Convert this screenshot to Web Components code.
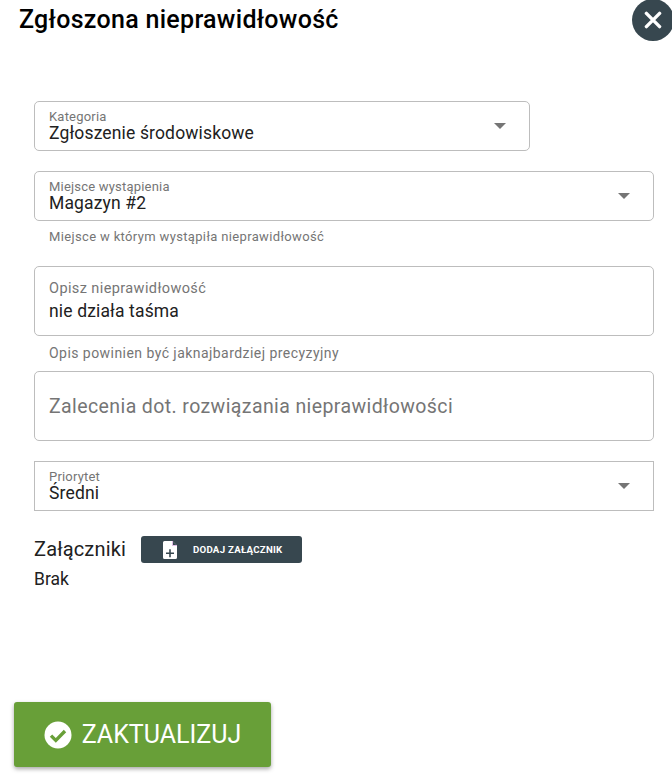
<!DOCTYPE html>
<html lang="pl">
<head>
<meta charset="utf-8">
<title>Zgłoszona nieprawidłowość</title>
<style>
  html, body { margin: 0; padding: 0; background: #fff; }
  body { font-family: Roboto, "Liberation Sans", sans-serif; width: 672px; height: 779px; overflow: hidden; }
</style>
</head>
<body>
<report-dialog>
  <span slot="title">Zgłoszona nieprawidłowość</span>
  <select-field label="Kategoria" value="Zgłoszenie środowiskowe" style="width:496px;margin-bottom:20px"></select-field>
  <select-field label="Miejsce wystąpienia" value="Magazyn #2" hint="Miejsce w którym wystąpiła nieprawidłowość" style="margin-bottom:21px"></select-field>
  <text-area-field label="Opisz nieprawidłowość" value="nie działa taśma" hint="Opis powinien być jaknajbardziej precyzyjny"></text-area-field>
  <text-area-field placeholder="Zalecenia dot. rozwiązania nieprawidłowości" style="margin-bottom:20px"></text-area-field>
  <select-field label="Priorytet" value="Średni" square></select-field>
  <attachment-list></attachment-list>
  <submit-button slot="footer">ZAKTUALIZUJ</submit-button>
</report-dialog>

<script>
class ReportDialog extends HTMLElement {
  connectedCallback() {
    this.attachShadow({ mode: 'open' });
    this.shadowRoot.innerHTML = `
      <style>
        :host { display: flex; flex-direction: column; width: 672px; height: 779px; position: relative; overflow: hidden; color: #000; }
        header { height: 101px; box-sizing: border-box; padding: 6px 0 0 19px; font-size: 25px; line-height: 28px; font-weight: 500; letter-spacing: 0.3px; }
        .body { padding: 0 18px 0 34px; flex: 1; }
        footer { padding: 0 0 12px 14px; }
        .close { position: absolute; left: 632px; top: -1px; width: 42px; height: 42px; border-radius: 50%; background: #37474f; display: flex; align-items: center; justify-content: center; }
      </style>
      <header><slot name="title"></slot></header>
      <div class="close">
        <svg width="18" height="18" viewBox="0 0 18 18"><path d="M2.4 2.4 15.6 15.6M15.6 2.4 2.4 15.6" stroke="#fff" stroke-width="3.4" stroke-linecap="round" fill="none"/></svg>
      </div>
      <div class="body"><slot></slot></div>
      <footer><slot name="footer"></slot></footer>
    `;
  }
}

class SelectField extends HTMLElement {
  connectedCallback() {
    this.attachShadow({ mode: 'open' });
    const hint = this.getAttribute('hint');
    this.shadowRoot.innerHTML = `
      <style>
        :host { display: block; }
        .box { height: 50px; box-sizing: border-box; border: 1px solid #bdbdbd; border-radius: ${this.hasAttribute('square') ? '0' : '5px'}; padding: 8px 14px 0; position: relative; }
        .label { font-size: 13px; line-height: 14px; color: #757575; letter-spacing: 0.2px; }
        .value { font-size: 17.5px; line-height: 19px; color: #212121; letter-spacing: 0.15px; }
        .arrow { position: absolute; right: 23px; top: 21px; width: 0; height: 0; border-left: 6.5px solid transparent; border-right: 6.5px solid transparent; border-top: 6.5px solid #757575; }
        .hint { font-size: 13px; line-height: 16px; color: #757575; padding: 8px 0 0 15px; letter-spacing: 0.35px; }
      </style>
      <div class="box">
        <div class="label">${this.getAttribute('label')}</div>
        <div class="value">${this.getAttribute('value')}</div>
        <div class="arrow"></div>
      </div>
      ${hint ? `<div class="hint">${hint}</div>` : ''}
    `;
  }
}

class TextAreaField extends HTMLElement {
  connectedCallback() {
    this.attachShadow({ mode: 'open' });
    const label = this.getAttribute('label');
    const hint = this.getAttribute('hint');
    const placeholder = this.getAttribute('placeholder');
    this.shadowRoot.innerHTML = `
      <style>
        :host { display: block; }
        .box { height: 70px; box-sizing: border-box; border: 1px solid #bdbdbd; border-radius: 5px; padding: 14px 14px 0; }
        .label { font-size: 14.5px; line-height: 16px; color: #757575; letter-spacing: 0.4px; }
        .value { font-size: 17.5px; line-height: 19px; color: #212121; margin-top: 5px; letter-spacing: 0.15px; }
        .placeholder { font-size: 19.5px; line-height: 22px; color: #757575; margin-top: 10px; letter-spacing: 0.4px; }
        .hint { font-size: 14px; line-height: 16px; color: #757575; padding: 9px 0 10px 15px; letter-spacing: 0.45px; }
      </style>
      <div class="box">
        ${label ? `<div class="label">${label}</div>` : ''}
        ${this.getAttribute('value') ? `<div class="value">${this.getAttribute('value')}</div>` : ''}
        ${placeholder ? `<div class="placeholder">${placeholder}</div>` : ''}
      </div>
      ${hint ? `<div class="hint">${hint}</div>` : ''}
    `;
  }
}

class AttachmentList extends HTMLElement {
  connectedCallback() {
    this.attachShadow({ mode: 'open' });
    this.shadowRoot.innerHTML = `
      <style>
        :host { display: block; padding-top: 25px; }
        .row { display: flex; align-items: center; gap: 15px; height: 27px; }
        .title { font-size: 20px; color: #212121; letter-spacing: 0.15px; padding-bottom: 2px; }
        button { display: flex; align-items: center; width: 161px; height: 27px; padding: 0 0 0 22px; box-sizing: border-box; border: 0; border-radius: 3px; background: #37474f; color: #fff; font: 700 9.7px Roboto, sans-serif; letter-spacing: 0.25px; }
        svg { margin-right: 16px; flex: none; }
        .empty { font-size: 17.5px; line-height: 20px; color: #212121; margin-top: 6px; }
      </style>
      <div class="row">
        <span class="title">Załączniki</span>
        <button>
          <svg width="14" height="18" viewBox="0 0 14 18"><path d="M1.5 0H9.5L14 4.5V16.5A1.5 1.5 0 0 1 12.5 18H1.5A1.5 1.5 0 0 1 0 16.5V1.5A1.5 1.5 0 0 1 1.5 0Z" fill="#fff"/><path d="M9.5 0V4.5H14Z" fill="#37474f"/><path d="M9.5 0V4.5H14" stroke="#e1bee7" stroke-width="1" fill="none"/><path d="M7 8.3V16.3M3 12.3H11" stroke="#37474f" stroke-width="1.6" fill="none"/></svg>
          DODAJ ZAŁĄCZNIK
        </button>
      </div>
      <div class="empty">Brak</div>
    `;
  }
}

class SubmitButton extends HTMLElement {
  connectedCallback() {
    this.attachShadow({ mode: 'open' });
    this.shadowRoot.innerHTML = `
      <style>
        :host { display: inline-block; }
        button { display: flex; align-items: center; justify-content: center; gap: 10px; width: 257px; height: 65px; border: 0; border-radius: 3px; padding: 0; background: #689f38; color: #fff; font: 400 25px Roboto, sans-serif; box-shadow: 0 2px 4px rgba(0,0,0,.35); }
      </style>
      <button>
        <svg width="28" height="28" viewBox="0 0 28 28"><circle cx="14" cy="14" r="13.5" fill="#fff"/><path d="M7 14.6 11.8 19.4 21 10" stroke="#689f38" stroke-width="3.4" fill="none"/></svg>
        <span><slot></slot></span>
      </button>
    `;
  }
}

customElements.define('report-dialog', ReportDialog);
customElements.define('select-field', SelectField);
customElements.define('text-area-field', TextAreaField);
customElements.define('attachment-list', AttachmentList);
customElements.define('submit-button', SubmitButton);
</script>
</body>
</html>
